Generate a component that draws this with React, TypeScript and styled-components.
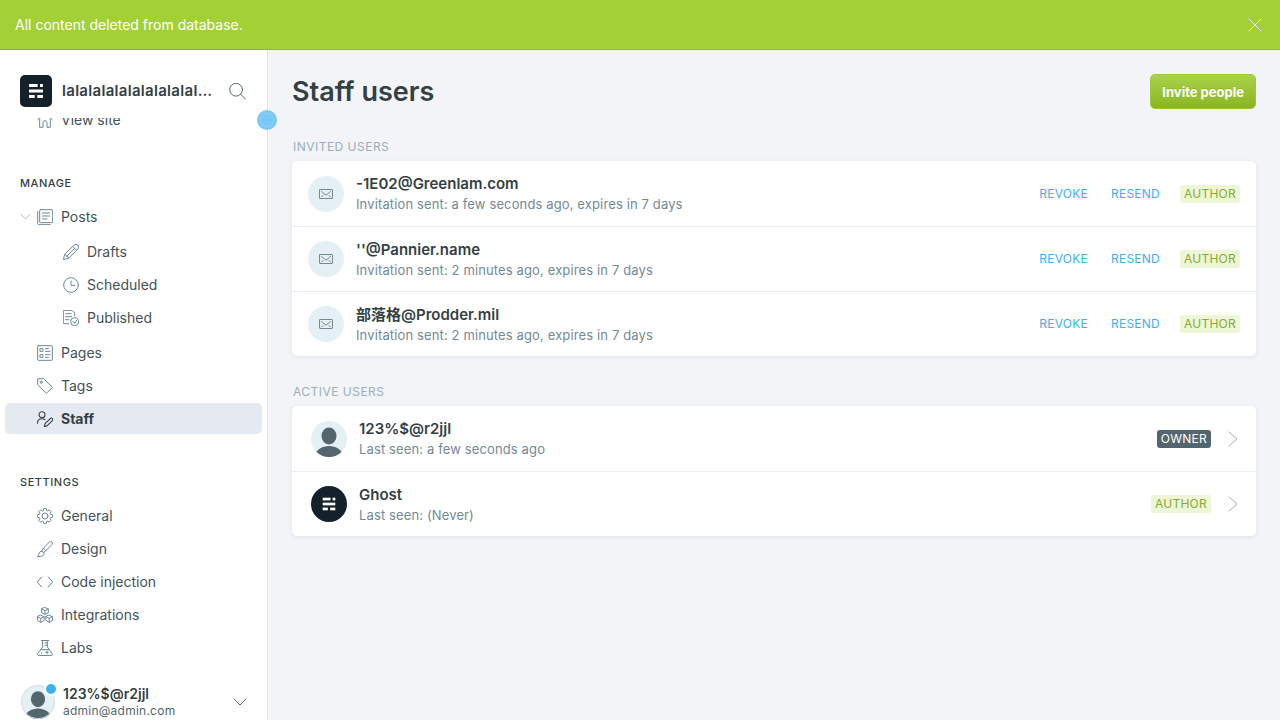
import React, { ReactNode } from "react";
import styled, { createGlobalStyle, css } from "styled-components";

const colors = {
  ink: "#343f44",
  slate: "#738a94",
  nav: "#54666d",
  icon: "#708894",
  mist: "#9baeb8",
  line: "#e5eff5",
  blue: "#3eb0ef",
  green: "#a4d037",
  greenDark: "#90bb27",
};

const GlobalStyle = createGlobalStyle`
  * { box-sizing: border-box; }
  body {
    margin: 0;
    background: #f2f4f8;
    color: ${colors.ink};
    font: 14px/20px Inter, "Noto Sans CJK SC", sans-serif;
  }
  h1, h2, h3, p, ul { margin: 0; padding: 0; }
  ul { list-style: none; }
  a { color: inherit; text-decoration: none; }
  button { font: inherit; color: inherit; background: none; border: 0; padding: 0; cursor: pointer; }
  svg { display: block; flex: none; }
`;

const Shell = styled.div`
  display: flex;
  flex-direction: column;
  height: 100vh;
`;

const Alert = styled.aside`
  display: flex;
  flex: none;
  align-items: center;
  justify-content: space-between;
  height: 50px;
  padding: 0 18px 0 15px;
  color: #fff;
  background: ${colors.green};
  border-bottom: 1px solid ${colors.greenDark};
`;

const Viewport = styled.div`
  display: flex;
  flex: 1;
  min-height: 0;
`;

const Sidebar = styled.nav`
  position: relative;
  display: flex;
  flex: none;
  flex-direction: column;
  width: 268px;
  background: #fff;
  border-right: 1px solid #dfe4ec;
`;

const Toggle = styled.button`
  position: absolute;
  top: 60px;
  right: -10px;
  z-index: 2;
`;

const SiteHeader = styled.header`
  display: flex;
  flex: none;
  align-items: center;
  gap: 10px;
  padding: 25px 21px 11px 20px;
`;

const SiteName = styled.h2`
  flex: 1;
  overflow: hidden;
  font-size: 15px;
  font-weight: 600;
  letter-spacing: 0.02em;
  white-space: nowrap;
  text-overflow: ellipsis;
`;

const SearchButton = styled.button`
  margin-left: 6px;
`;

const NavScroll = styled.div`
  display: flex;
  flex: 1;
  flex-direction: column-reverse;
  min-height: 0;
  overflow-y: auto;
  scrollbar-width: none;
`;

const NavContent = styled.div`
  padding: 0 5px 13px;
`;

const NavHeading = styled.h3`
  margin: 41px 15px 11px;
  font-size: 11px;
  font-weight: 500;
  line-height: 14px;
  letter-spacing: 0.05em;
  text-transform: uppercase;
`;

const NavList = styled.ul<{ $nested?: boolean }>`
  display: flex;
  flex-direction: column;
  gap: 2px;
  ${(p) => p.$nested && css`margin: 4px 0 2px; padding-left: 26px;`}
`;

const NavLink = styled.a<{ $active?: boolean }>`
  display: flex;
  align-items: center;
  gap: 8px;
  height: 31px;
  padding-left: 32px;
  color: ${(p) => (p.$active ? colors.ink : "#445259")};
  font-weight: ${(p) => (p.$active ? 700 : 400)};
  background: ${(p) => (p.$active ? "#e5eaf2" : "transparent")};
  border-radius: 5px;
  svg { color: ${(p) => (p.$active ? colors.ink : colors.icon)}; }
`;

const Expandable = styled.div`
  display: flex;
  align-items: center;
  padding-left: 15px;
  color: ${colors.mist};
  ${NavLink} { flex: 1; padding-left: 6px; }
`;

const UserMenu = styled.button`
  display: flex;
  flex: none;
  align-items: center;
  gap: 8px;
  height: 44px;
  padding: 8px 20px 0 21px;
  text-align: left;
  > svg { color: ${colors.nav}; }
`;

const UserPicture = styled.span`
  position: relative;
`;

const UnreadDot = styled.span`
  position: absolute;
  top: -3px;
  right: -3px;
  width: 14px;
  height: 14px;
  background: ${colors.blue};
  border: 2px solid #fff;
  border-radius: 50%;
`;

const UserText = styled.span`
  display: flex;
  flex: 1;
  flex-direction: column;
`;

const UserName = styled.span`
  color: ${colors.ink};
  font-weight: 600;
  line-height: 18px;
`;

const UserEmail = styled.span`
  color: ${colors.nav};
  font-size: 12px;
  line-height: 16px;
  letter-spacing: 0.02em;
`;

const Main = styled.main`
  flex: 1;
  min-width: 0;
  padding: 24px;
  overflow-y: auto;
`;

const PageHeader = styled.header`
  display: flex;
  align-items: center;
  justify-content: space-between;
  height: 35px;
  margin-bottom: 2px;
`;

const Title = styled.h1`
  font-size: 27px;
  font-weight: 600;
  line-height: 35px;
`;

const InviteButton = styled.button`
  height: 35px;
  padding: 0 11px;
  color: #fff;
  font-size: 13px;
  font-weight: 700;
  text-shadow: 0 -1px 0 rgba(0, 0, 0, 0.1);
  background: linear-gradient(#aad24b, #8ab522);
  border: 1px solid #9cc933;
  border-radius: 5px;
`;

const Section = styled.section`
  padding-top: 26px;
`;

const SectionLabel = styled.h2`
  margin: 0 1px 4px;
  color: ${colors.mist};
  font-size: 12px;
  font-weight: 400;
  line-height: 20px;
  letter-spacing: 0.04em;
  text-transform: uppercase;
`;

const Card = styled.ul`
  background: #fff;
  border-radius: 5px;
  box-shadow: 0 1px 4px rgba(39, 60, 80, 0.1);
`;

const PersonRow = styled.li<{ $inset?: boolean }>`
  display: flex;
  align-items: center;
  gap: 12px;
  height: 65px;
  padding: 0 16px 0 ${(p) => (p.$inset ? 19 : 16)}px;
  & + & { border-top: 1px solid ${colors.line}; }
`;

const MailCircle = styled.span`
  display: grid;
  flex: none;
  place-items: center;
  width: 36px;
  height: 36px;
  color: ${colors.slate};
  background: #e5eff6;
  border-radius: 50%;
`;

const PersonText = styled.div`
  flex: 1;
  min-width: 0;
  padding-top: 2px;
`;

const PersonName = styled.h3`
  font-size: 15px;
  font-weight: 600;
  line-height: 20px;
`;

const PersonDetail = styled.p`
  color: ${colors.slate};
  font-size: 13px;
  line-height: 21px;
  letter-spacing: 0.01em;
`;

const Actions = styled.div`
  display: flex;
  align-items: center;
  gap: 20px;
`;

const ActionGroup = styled.div`
  display: flex;
  gap: 23px;
`;

const ActionButton = styled.button`
  color: ${colors.blue};
  font-size: 12px;
  letter-spacing: 0.02em;
  text-transform: uppercase;
`;

const Badge = styled.span<{ $owner?: boolean }>`
  padding: 0 4px;
  color: ${(p) => (p.$owner ? "#fff" : "#88ab2e")};
  font-size: 12px;
  line-height: 18px;
  letter-spacing: 0.02em;
  text-transform: uppercase;
  background: ${(p) => (p.$owner ? "#54666d" : "#edf6d7")};
  border-radius: 3px;
`;

const RowLink = styled.a`
  display: flex;
  align-items: center;
  gap: 16px;
`;

const Line = ({ size = 16, box = 24, weight = 1, children }: { size?: number; box?: number; weight?: number; children: ReactNode }) => (
  <svg width={size} height={size} viewBox={`0 0 ${box} ${box}`} fill="none" stroke="currentColor" strokeWidth={weight} strokeLinecap="round" strokeLinejoin="round" aria-hidden="true">
    {children}
  </svg>
);

const stroke = 1.5;

// Eight rounded teeth: each one rises from the root circle to the tip circle and back.
const gearPath =
  Array.from({ length: 8 }, (_, tooth) =>
    [[-17, 8.7], [-10, 11.3], [10, 11.3], [17, 8.7]].map(([offset, radius]) => {
      const angle = ((tooth * 45 + offset) * Math.PI) / 180;
      return `${(12 + radius * Math.sin(angle)).toFixed(2)} ${(12 - radius * Math.cos(angle)).toFixed(2)}`;
    }),
  )
    .flat()
    .map((point, i) => (i ? "L" : "M") + point)
    .join("") + "Z";

const icons = {
  home: <Line weight={stroke}><path d="M1 11.500 12 1l11 10.500M4 10v13h5v-7a3 3 0 0 1 6 0v7h5V10" /></Line>,
  posts: <Line weight={stroke}><rect x="4" y="1" width="19.500" height="19.500" rx="1" /><path d="M1 4v18a1.500 1.500 0 0 0 1.500 1.500H20M8 6h11M8 10.500h11M8 15h7" /></Line>,
  drafts: <Line weight={stroke}><path d="m2.300 16-1.600 7.300L8 21.700 22.300 7.500a4 4 0 0 0-5.800-5.800ZM2.300 16c2.500 0 3 1 3 2.700 1.700 0 2.700.5 2.700 3M14.500 3.700l5.800 5.800M5.300 18.700 17.500 6.500" /></Line>,
  scheduled: <Line weight={stroke}><circle cx="12" cy="12" r="11" /><path d="M12 6v6.500h5.500" /></Line>,
  published: <Line weight={stroke}><path d="M8.500 20.500h-7a1 1 0 0 1-1-1v-18a1 1 0 0 1 1-1h12l4 4V9M4 5.500h8M4 10h9M4 14.500h5" /><circle cx="17.500" cy="17.500" r="6" /><path d="m15 17.500 2 2.500 3.500-4.500" /></Line>,
  pages: <Line weight={stroke}><rect x="1" y="1" width="22" height="22" rx="1" /><path d="M5 5.500h4v4H5ZM5 14.500h4v4H5ZM12.500 5.500H17M12.500 9.500H19.500M12.500 14.500H19.500M12.500 18.500H17" /></Line>,
  tags: <Line weight={stroke}><path d="M1 2v7.500a2 2 0 0 0 .6 1.400L14.200 23l9-8.800L10.800 1.600A2 2 0 0 0 9.400 1H2a1 1 0 0 0-1 1Z" /><circle cx="6.300" cy="6.300" r="1.700" /></Line>,
  staff: <Line weight={1.6}><circle cx="7.500" cy="5.500" r="4.500" /><path d="M.7 18.500c0-5 3-7 6.800-7 2 0 3.500.5 4.500 1.500M11 23.300l1-4.500 8-7.500a2 2 0 0 1 3 3l-8 8Z" /></Line>,
  general: <Line weight={stroke}><circle cx="12" cy="12" r="4.500" /><path d={gearPath} /></Line>,
  design: <Line weight={stroke}><path d="M1 23c2-1 1.500-3.500 2.500-5.500a4 4 0 0 1 5.500-1.300c2 1.300 2 4 .3 5.300C7.500 23.300 3.500 23.500 1 23ZM6.500 15.500l3-4.500 9-9.500a2.500 2.500 0 0 1 4 3.500l-9 9.500-4 3M9.500 11l4 3.500" /></Line>,
  code: <Line weight={stroke}><path d="m7 4.500-6.500 7.500L7 19.500M17 4.500l6.500 7.500-6.500 7.500" /></Line>,
  integrations: (
    <Line weight={stroke}>
      <path d="m12 .7 5 2.300v5.500L12 11 7 8.500V3ZM7 3l5 2.500L17 3M12 5.500V11" />
      <path d="m5.700 12.300 5 2.300v5.500l-5 2.900-5-2.900v-5.500ZM.7 14.600l5 2.500 5-2.500M5.700 17.100V23" />
      <path d="m18.300 12.300 5 2.300v5.500l-5 2.900-5-2.900v-5.500ZM13.300 14.600l5 2.500 5-2.500M18.300 17.100V23" />
    </Line>
  ),
  labs: <Line weight={stroke}><path d="M6.500.8h11M8.500 1v9.500L1 20.500a2 2 0 0 0 1.700 2.800h18.600a2 2 0 0 0 1.700-2.800l-7.500-10V1M12 4.500h3M12 8h3M5.500 14.500h13M15 16.500v4M13 18.500h4M7 19v1" /></Line>,
};

const SearchIcon = () => <Line size={17} weight={1.4}><g color={colors.nav}><circle cx="10" cy="9.500" r="9" /><path d="m16.500 16 7 7" /></g></Line>;
const CloseIcon = () => <Line size={14} box={14}><path d="m1 1 12 12M13 1 1 13" /></Line>;
const MailIcon = () => <Line size={14} box={14}><rect x=".5" y="2.500" width="13" height="9" rx=".5" /><path d="m2.500 4.500 3.500 3q1 .8 2 0l3.500-3M2.500 10 4 8.500M11.500 10 10 8.500" /></Line>;
const ChevronDown = ({ size }: { size: number }) => <Line size={size} box={14}><path d="m1 4 6 6 6-6" /></Line>;
const ChevronRight = () => (
  <svg width="13" height="16" viewBox="0 0 13 16" fill="none" stroke={colors.mist} strokeWidth="1" strokeLinecap="round" aria-hidden="true">
    <path d="m2 1 8 7-8 7" />
  </svg>
);

const GhostMark = ({ size, round }: { size: number; round?: boolean }) => (
  <svg width={size} height={size} viewBox="0 0 32 32" aria-hidden="true">
    <rect width="32" height="32" rx={round ? 16 : 5} fill="#15212a" />
    <g fill="#fff" transform={round ? "translate(3.200 3.200) scale(.8)" : undefined}>
      <rect x="9" y="9" width="8.700" height="3" />
      <rect x="20" y="9" width="3" height="3" />
      <rect x="9" y="14.500" width="14" height="3" />
      <rect x="9" y="20" width="5.700" height="3" />
      <rect x="17.300" y="20" width="5.700" height="3" />
    </g>
  </svg>
);

const Silhouette = ({ size, ring }: { size: number; ring?: boolean }) => (
  <svg width={size} height={size} viewBox="0 0 36 36" aria-hidden="true">
    <defs><clipPath id={`face${size}`}><circle cx="18" cy="18" r="18" /></clipPath></defs>
    <g clipPath={`url(#face${size})`}>
      <rect width="36" height="36" fill="#e5eff6" />
      <ellipse cx="18" cy="15" rx="7.500" ry="8.500" fill={colors.nav} />
      <path d="M3 36c2-7.500 8-11 15-11s13 3.500 15 11Z" fill={colors.nav} />
    </g>
    {ring && <circle cx="18" cy="18" r="17.500" fill="none" stroke="#d3dde4" />}
  </svg>
);

type IconName = keyof typeof icons;

const NavItem = ({ icon, label, active }: { icon: IconName; label: string; active?: boolean }) => (
  <li>
    <NavLink href="#" $active={active} aria-current={active ? "page" : undefined}>
      {icons[icon]}
      {label}
    </NavLink>
  </li>
);

const invites = [
  { email: "-1E02@Greenlam.com", sent: "a few seconds ago" },
  { email: "''@Pannier.name", sent: "2 minutes ago" },
  { email: "部落格@Prodder.mil", sent: "2 minutes ago" },
];

export default function App() {
  return (
    <>
      <GlobalStyle />
      <Shell>
        <Alert role="status">
          <span>All content deleted from database.</span>
          <button aria-label="Close"><CloseIcon /></button>
        </Alert>
        <Viewport>
          <Sidebar>
            <SiteHeader>
              <GhostMark size={32} />
              <SiteName>lalalalalalalalalalalalalala</SiteName>
              <SearchButton aria-label="Search"><SearchIcon /></SearchButton>
            </SiteHeader>
            <NavScroll>
              <NavContent>
                <NavList><NavItem icon="home" label="View site" /></NavList>
                <NavHeading>Manage</NavHeading>
                <NavList>
                  <li>
                    <Expandable>
                      <ChevronDown size={11} />
                      <NavLink href="#">{icons.posts}Posts</NavLink>
                    </Expandable>
                    <NavList $nested>
                      <NavItem icon="drafts" label="Drafts" />
                      <NavItem icon="scheduled" label="Scheduled" />
                      <NavItem icon="published" label="Published" />
                    </NavList>
                  </li>
                  <NavItem icon="pages" label="Pages" />
                  <NavItem icon="tags" label="Tags" />
                  <NavItem icon="staff" label="Staff" active />
                </NavList>
                <NavHeading>Settings</NavHeading>
                <NavList>
                  <NavItem icon="general" label="General" />
                  <NavItem icon="design" label="Design" />
                  <NavItem icon="code" label="Code injection" />
                  <NavItem icon="integrations" label="Integrations" />
                  <NavItem icon="labs" label="Labs" />
                </NavList>
              </NavContent>
            </NavScroll>
            <UserMenu>
              <UserPicture><Silhouette size={34} ring /><UnreadDot /></UserPicture>
              <UserText>
                <UserName>123%$@r2jjl</UserName>
                <UserEmail>admin@admin.com</UserEmail>
              </UserText>
              <ChevronDown size={14} />
            </UserMenu>
            <Toggle aria-label="Toggle menu">
              <svg width="20" height="20" viewBox="0 0 20 20">
                <circle cx="10" cy="10" r="10" fill="#78c8f4" />
                <circle cx="10" cy="10" r="7" fill="none" stroke="#98d2f4" strokeWidth=".8" />
              </svg>
            </Toggle>
          </Sidebar>
          <Main>
            <PageHeader>
              <Title>Staff users</Title>
              <InviteButton>Invite people</InviteButton>
            </PageHeader>
            <Section>
              <SectionLabel>Invited users</SectionLabel>
              <Card>
                {invites.map(({ email, sent }) => (
                  <PersonRow key={email}>
                    <MailCircle><MailIcon /></MailCircle>
                    <PersonText>
                      <PersonName>{email}</PersonName>
                      <PersonDetail>Invitation sent: {sent}, expires in 7 days</PersonDetail>
                    </PersonText>
                    <Actions>
                      <ActionGroup>
                        <ActionButton>Revoke</ActionButton>
                        <ActionButton>Resend</ActionButton>
                      </ActionGroup>
                      <Badge>Author</Badge>
                    </Actions>
                  </PersonRow>
                ))}
              </Card>
            </Section>
            <Section>
              <SectionLabel>Active users</SectionLabel>
              <Card>
                <PersonRow $inset>
                  <Silhouette size={36} />
                  <PersonText>
                    <PersonName>123%$@r2jjl</PersonName>
                    <PersonDetail>Last seen: a few seconds ago</PersonDetail>
                  </PersonText>
                  <RowLink href="#" aria-label="Edit 123%$@r2jjl"><Badge $owner>Owner</Badge><ChevronRight /></RowLink>
                </PersonRow>
                <PersonRow $inset>
                  <GhostMark size={36} round />
                  <PersonText>
                    <PersonName>Ghost</PersonName>
                    <PersonDetail>Last seen: (Never)</PersonDetail>
                  </PersonText>
                  <RowLink href="#" aria-label="Edit Ghost"><Badge>Author</Badge><ChevronRight /></RowLink>
                </PersonRow>
              </Card>
            </Section>
          </Main>
        </Viewport>
      </Shell>
    </>
  );
}
